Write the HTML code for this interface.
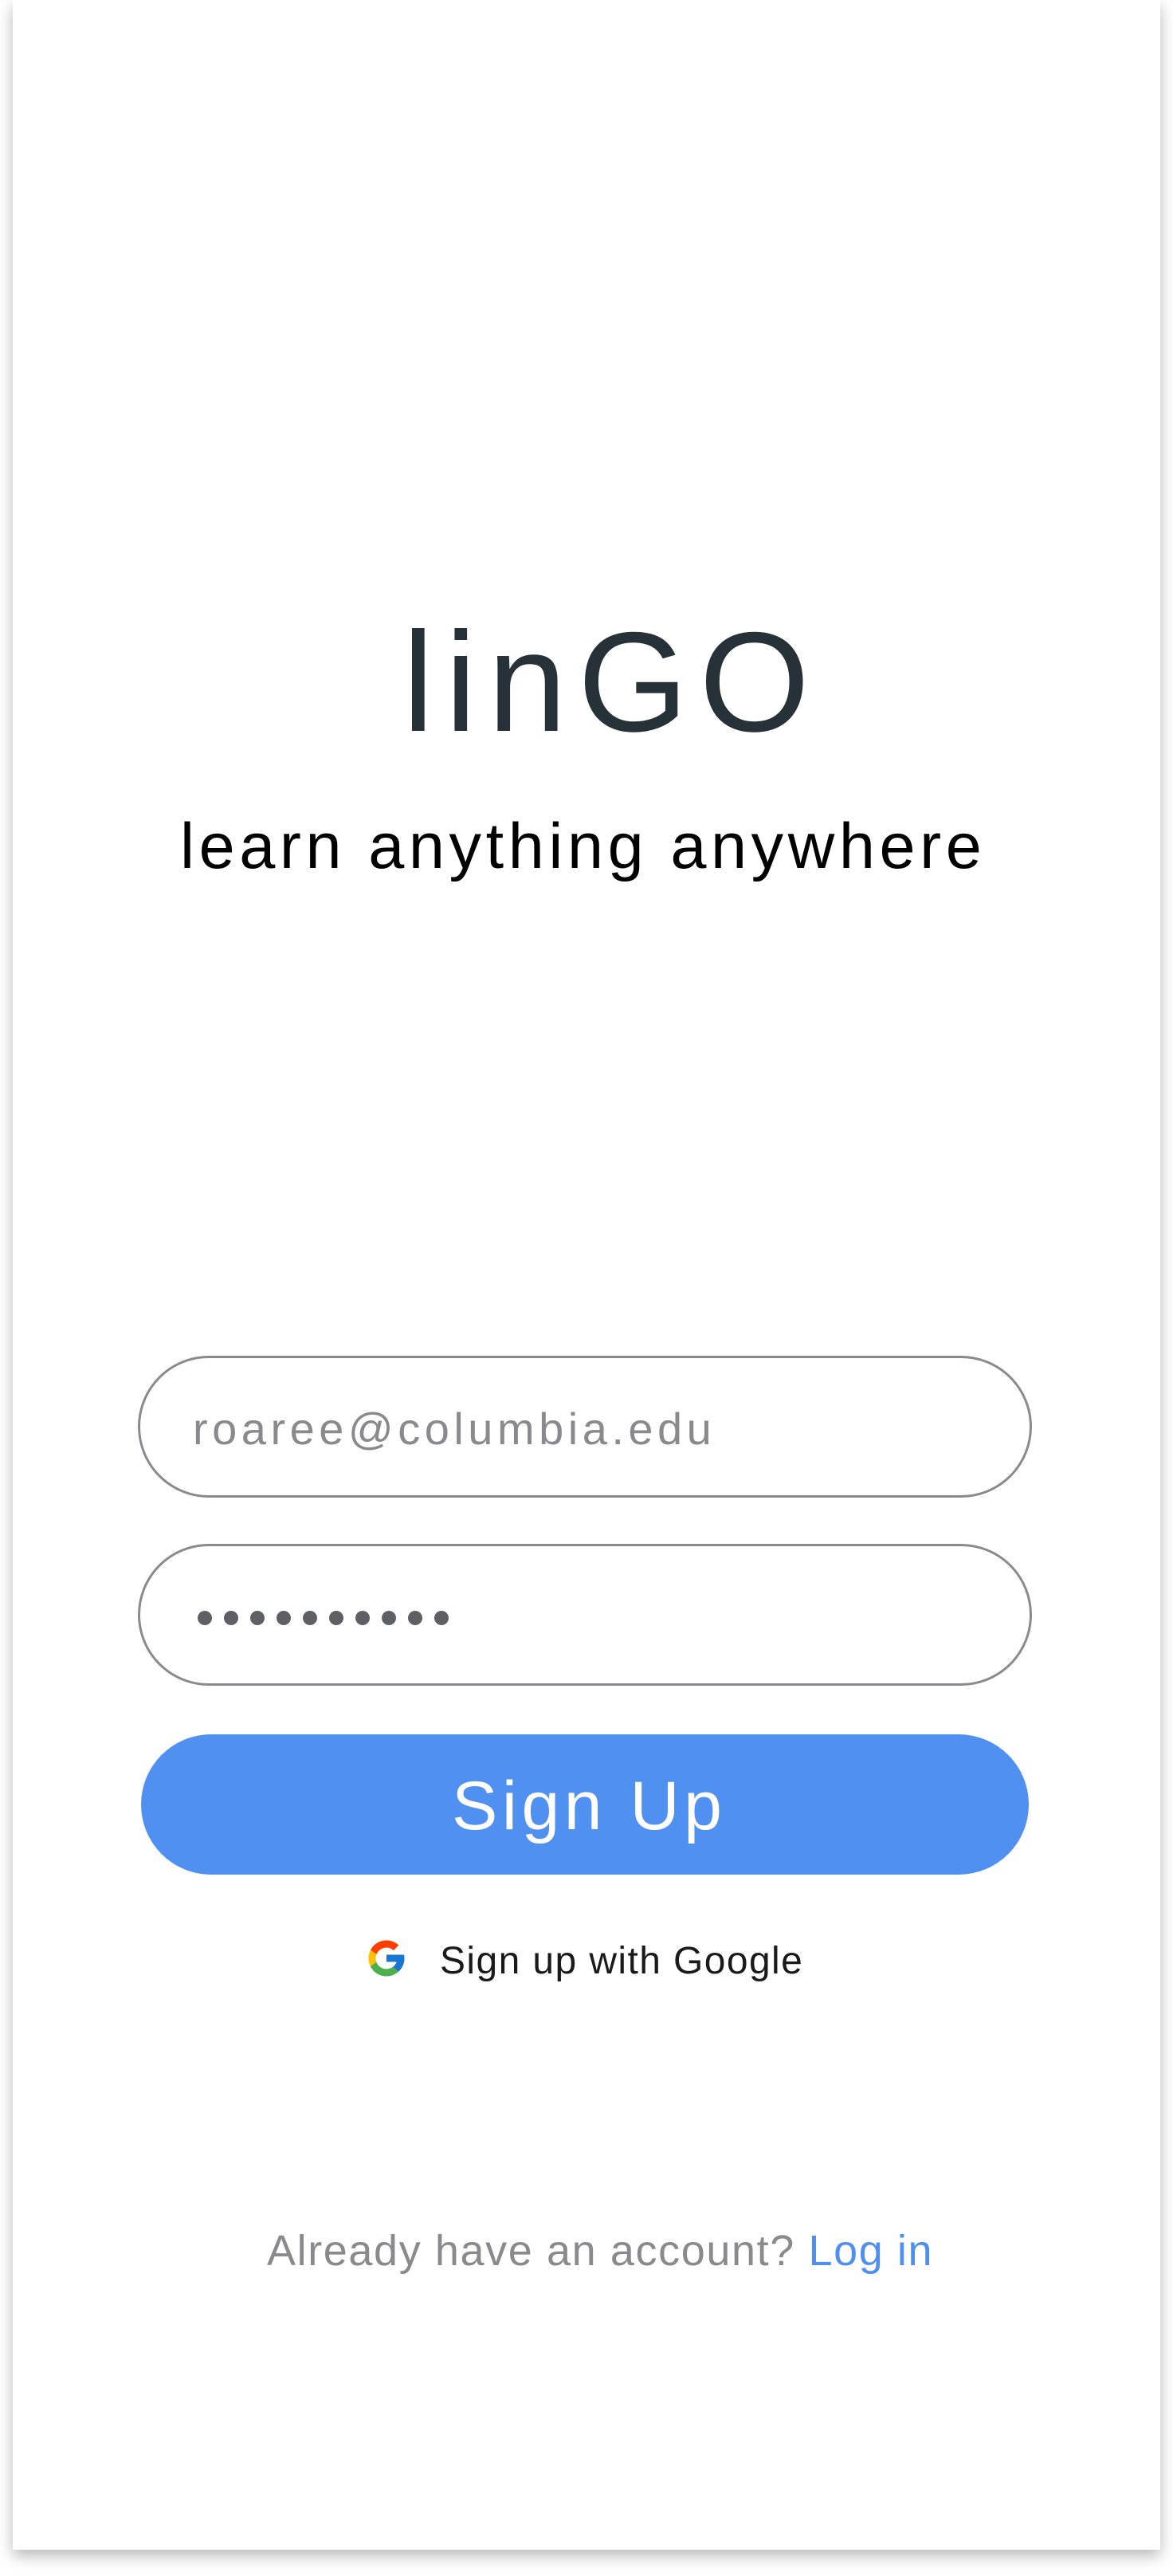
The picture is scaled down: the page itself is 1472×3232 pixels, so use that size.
<!DOCTYPE html>
<html><head><meta charset="utf-8"><style>
html,body{margin:0;padding:0;background:#fff;}
body{width:1472px;height:3232px;position:relative;overflow:hidden;font-family:"Liberation Sans",sans-serif;}
.card{position:absolute;left:16px;top:0;width:1440px;height:3199px;background:#fff;box-shadow:0 8px 18px rgba(0,0,0,0.28);}
.t{position:absolute;white-space:nowrap;line-height:1;}
.box{position:absolute;left:173px;width:1116px;height:172px;border:3px solid #8a8a8e;border-radius:90px;box-sizing:content-box;}
.dot{position:absolute;width:18px;height:18px;border-radius:50%;background:#5f5f66;top:2021px;}
</style></head><body>
<div class="card"></div>
<div class="t" style="left:505px;top:767px;font-size:178px;color:#263238;letter-spacing:14px;">linGO</div>
<div class="t" style="left:226px;top:1022px;font-size:81px;color:#000;letter-spacing:5.6px;">learn anything anywhere</div>
<div class="box" style="top:1701px;"></div>
<div class="t" style="left:242px;top:1765px;font-size:56px;color:#8a8a8e;letter-spacing:5.5px;">roaree@columbia.edu</div>
<div class="box" style="top:1937px;"></div>
<div class="dot" style="left:248px"></div><div class="dot" style="left:281px"></div><div class="dot" style="left:314px"></div><div class="dot" style="left:347px"></div><div class="dot" style="left:380px"></div><div class="dot" style="left:413px"></div><div class="dot" style="left:446px"></div><div class="dot" style="left:479px"></div><div class="dot" style="left:512px"></div><div class="dot" style="left:545px"></div>
<div style="position:absolute;left:177px;top:2176px;width:1114px;height:176px;border-radius:88px;background:#5090f0;"></div>
<div class="t" style="left:567px;top:2223px;font-size:86px;color:#fff;letter-spacing:5.5px;">Sign Up</div>
<svg style="position:absolute;left:458px;top:2430px" width="54" height="54" viewBox="0 0 48 48">
<path fill="#FFC107" d="M43.6 20.1H42V20H24v8h11.3C33.7 32.7 29.2 36 24 36c-6.6 0-12-5.4-12-12s5.4-12 12-12c3.1 0 5.8 1.2 7.900 3.1l5.7-5.7C34 6.1 29.3 4 24 4 12.9 4 4 12.9 4 24s8.9 20 20 20 20-8.9 20-20c0-1.3-.1-2.6-.4-3.9z"/>
<path fill="#FF3D00" d="M6.3 14.7l6.6 4.8C14.7 15.1 19 12 24 12c3.1 0 5.8 1.2 7.9 3.1l5.7-5.7C34 6.1 29.3 4 24 4 16.3 4 9.7 8.3 6.3 14.7z"/>
<path fill="#4CAF50" d="M24 44c5.2 0 9.9-2 13.4-5.2l-6.2-5.2C29.2 35.1 26.7 36 24 36c-5.2 0-9.6-3.3-11.3-7.9l-6.5 5C9.5 39.6 16.2 44 24 44z"/>
<path fill="#1976D2" d="M43.6 20.1H42V20H24v8h11.3c-.8 2.2-2.2 4.2-4.100 5.6l6.2 5.2C37 39.2 44 34 44 24c0-1.3-.1-2.6-.4-3.9z"/>
</svg>
<div class="t" style="left:552px;top:2437px;font-size:48px;color:#1a1a1a;letter-spacing:1.4px;">Sign up with Google</div>
<div class="t" style="left:335px;top:2797px;font-size:54px;color:#8a8a8e;letter-spacing:1.6px;">Already have an account? <span style="color:#4f8ff0">Log in</span></div>
</body></html>
